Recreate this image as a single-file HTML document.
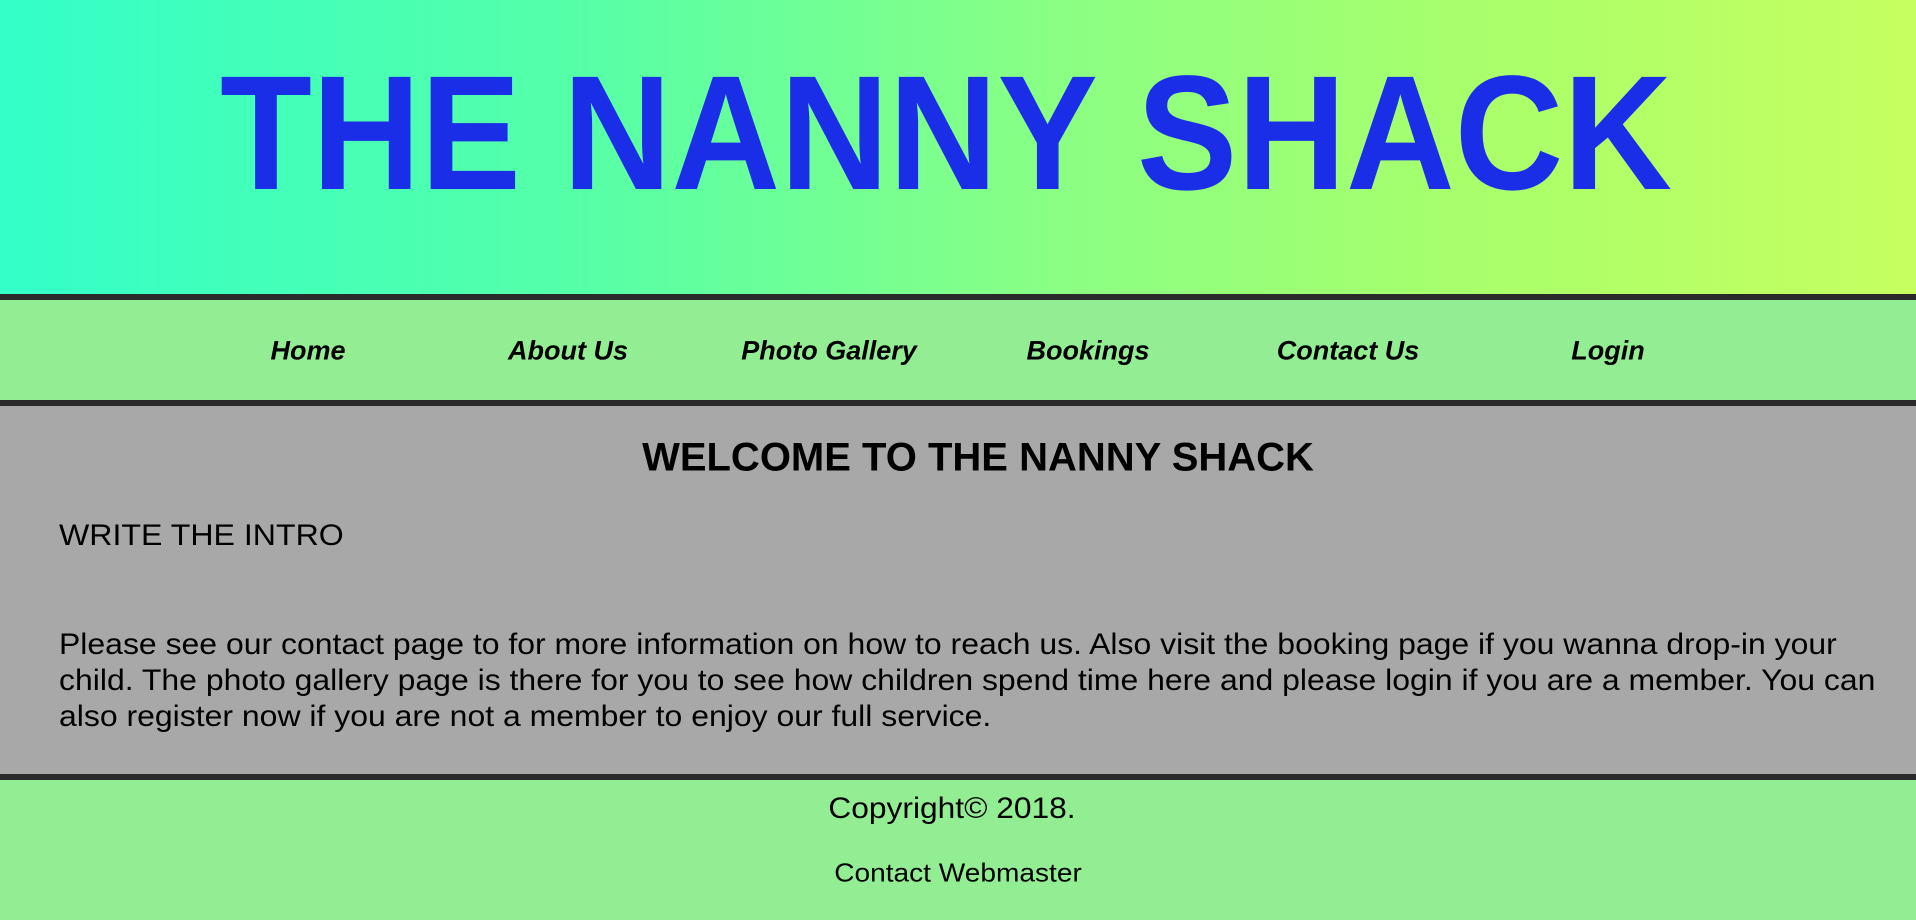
<!DOCTYPE html>
<html><head><meta charset="utf-8"><style>
html,body{margin:0;padding:0;width:1916px;height:920px;overflow:hidden;font-family:"Liberation Sans",Arial,sans-serif;color:#000}
.hdr{position:absolute;left:0;top:0;width:1916px;height:294px;background:linear-gradient(90deg,#33ffc8 0%,#55ffa8 30%,#8aff84 55%,#aaff6a 78%,#c6ff60 100%)}
.bar{position:absolute;left:0;width:1916px;height:6px;background:#2a2a2a}
.nav{position:absolute;left:0;top:300px;width:1916px;height:100px;background:#93ed93}
.nav span{position:absolute;top:51px;font-weight:bold;font-style:italic;font-size:27px;transform:translate(-50%,-50%);white-space:nowrap}
.main{position:absolute;left:0;top:406px;width:1916px;height:368px;background:#a8a8a8}
.foot{position:absolute;left:0;top:780px;width:1916px;height:140px;background:#93ed93}
.t{position:absolute;white-space:nowrap}
</style></head><body>
<div class="hdr">
<svg width="1916" height="294" style="position:absolute;left:0;top:0">
<text x="220" y="189" font-family="Liberation Sans, sans-serif" font-weight="bold" font-size="163" fill="#1a2ee8" textLength="1452" lengthAdjust="spacingAndGlyphs">THE NANNY SHACK</text>
</svg>
</div>
<div class="bar" style="top:294px"></div>
<div class="nav">
<span style="left:308px">Home</span>
<span style="left:568px">About Us</span>
<span style="left:829px">Photo Gallery</span>
<span style="left:1088px">Bookings</span>
<span style="left:1348px">Contact Us</span>
<span style="left:1608px">Login</span>
</div>
<div class="bar" style="top:400px"></div>
<div class="main">
<div class="t" style="left:978px;top:52px;transform:translate(-50%,-50%);font-weight:bold;font-size:40px">WELCOME TO THE NANNY SHACK</div>
<div class="t" style="left:59px;top:130px;transform-origin:0 50%;transform:translateY(-50%) scaleX(1.07);font-size:30px">WRITE THE INTRO</div>
<div class="t" style="left:59px;top:221px;font-size:30px;line-height:36px;transform-origin:0 0;transform:scaleX(1.065)">Please see our contact page to for more information on how to reach us. Also visit the booking page if you wanna drop-in your<br>child. The photo gallery page is there for you to see how children spend time here and please login if you are a member. You can<br>also register now if you are not a member to enjoy our full service.</div>
</div>
<div class="bar" style="top:774px"></div>
<div class="foot">
<div class="t" style="left:952px;top:29px;transform:translate(-50%,-50%) scaleX(1.057);font-size:30px">Copyright© 2018.</div>
<div class="t" style="left:958px;top:93px;transform:translate(-50%,-50%) scaleX(1.08);font-size:26px">Contact Webmaster</div>
</div>
</body></html>
